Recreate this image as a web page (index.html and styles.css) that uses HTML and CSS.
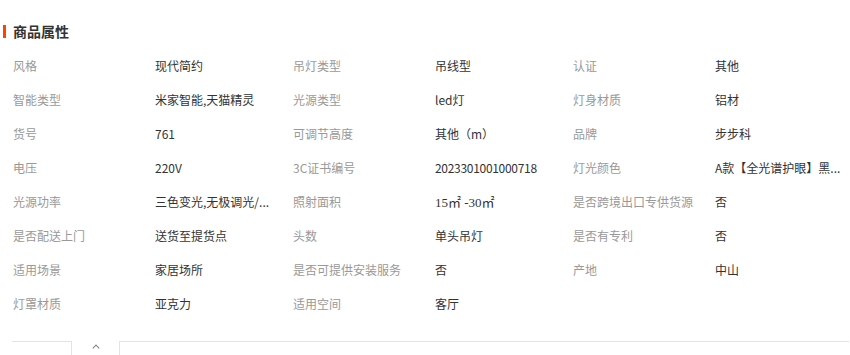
FILE: index.html
```html
<!DOCTYPE html>
<html lang="zh-CN">
<head>
<meta charset="utf-8">
<link rel="stylesheet" href="styles.css">
</head>
<body>
<div class="panel">
  <div class="title"><span class="bar"></span><span class="title-text">商品属性</span></div>
  <div class="attrs">
    <div class="item"><span class="k">风格</span><span class="v">现代简约</span></div>
    <div class="item"><span class="k">吊灯类型</span><span class="v">吊线型</span></div>
    <div class="item"><span class="k">认证</span><span class="v">其他</span></div>

    <div class="item"><span class="k">智能类型</span><span class="v">米家智能,天猫精灵</span></div>
    <div class="item"><span class="k">光源类型</span><span class="v">led灯</span></div>
    <div class="item"><span class="k">灯身材质</span><span class="v">铝材</span></div>

    <div class="item"><span class="k">货号</span><span class="v">761</span></div>
    <div class="item"><span class="k">可调节高度</span><span class="v">其他（m）</span></div>
    <div class="item"><span class="k">品牌</span><span class="v">步步科</span></div>

    <div class="item"><span class="k">电压</span><span class="v">220V</span></div>
    <div class="item"><span class="k">3C证书编号</span><span class="v num">2023301001000718</span></div>
    <div class="item"><span class="k">灯光颜色</span><span class="v">A款【全光谱护眼】黑...</span></div>

    <div class="item"><span class="k">光源功率</span><span class="v">三色变光,无极调光/...</span></div>
    <div class="item"><span class="k">照射面积</span><span class="v area">15㎡ -30㎡</span></div>
    <div class="item"><span class="k">是否跨境出口专供货源</span><span class="v">否</span></div>

    <div class="item"><span class="k">是否配送上门</span><span class="v">送货至提货点</span></div>
    <div class="item"><span class="k">头数</span><span class="v">单头吊灯</span></div>
    <div class="item"><span class="k">是否有专利</span><span class="v">否</span></div>

    <div class="item"><span class="k">适用场景</span><span class="v">家居场所</span></div>
    <div class="item"><span class="k">是否可提供安装服务</span><span class="v">否</span></div>
    <div class="item"><span class="k">产地</span><span class="v">中山</span></div>

    <div class="item"><span class="k">灯罩材质</span><span class="v">亚克力</span></div>
    <div class="item"><span class="k">适用空间</span><span class="v">客厅</span></div>
    <div class="item"></div>
  </div>
  <div class="footer">
    <div class="box-left"></div>
    <div class="toggle">
      <svg width="8" height="5" viewBox="0 0 8 5"><path d="M0.8 4.4 L4 1.2 L7.2 4.4" fill="none" stroke="#8a8a8a" stroke-width="1.2"/></svg>
    </div>
    <div class="box-right"></div>
  </div>
</div>
</body>
</html>
```
FILE: styles.css
```css
html, body {
  margin: 0;
  padding: 0;
  background: #fff;
}
body {
  font-family: "Noto Sans CJK SC", "Liberation Sans", sans-serif;
  font-size: 12px;
  overflow: hidden;
}
.panel {
  width: 850px;
  height: 355px;
}
.title {
  display: flex;
  align-items: center;
  height: 20px;
  padding-top: 21px;
  padding-left: 3px;
}
.bar {
  display: block;
  width: 3px;
  height: 13px;
  background: #ff4400;
}
.title-text {
  margin-left: 7px;
  font-size: 14px;
  font-weight: bold;
  color: #333;
  line-height: 20px;
}
.attrs {
  margin-top: 7px;
  padding-left: 13px;
  display: grid;
  grid-template-columns: 280px 280px 280px;
  grid-auto-rows: 34px;
}
.item {
  display: flex;
  align-items: center;
  white-space: nowrap;
}
.k {
  width: 142px;
  color: #999;
  flex: none;
}
.v {
  color: #333;
}
.num {
  letter-spacing: -0.3px;
}
.area {
  font-family: "Liberation Serif", "Noto Sans CJK SC", serif;
  font-size: 13px;
}
.footer {
  margin-top: 21px;
  display: flex;
  align-items: flex-start;
  padding-left: 12px;
}
.box-left {
  width: 59px;
  height: 20px;
  border-top: 1px solid #e3e3e3;
  border-right: 1px solid #e3e3e3;
}
.toggle {
  width: 47px;
  display: flex;
  justify-content: center;
  padding-top: 3px;
}
.box-right {
  flex: 1;
  height: 20px;
  border-top: 1px solid #e3e3e3;
  border-left: 1px solid #e3e3e3;
  margin-right: 1px;
}
```
